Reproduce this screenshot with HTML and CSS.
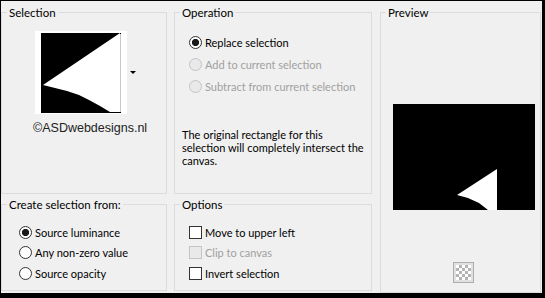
FILE: index.html
```html
<!DOCTYPE html>
<html lang="en">
<head>
    <meta charset="UTF-8">
    <title>Selection from mask</title>
    <link rel="stylesheet" href="styles.css">
</head>
<body>
<div class="dialog">
    <fieldset class="group group-selection">
        <legend>Selection</legend>
        <div class="thumb-row">
            <div class="thumb">
                <svg width="92" height="83" viewBox="0 0 92 83">
                    <rect x="0" y="0" width="92" height="83" fill="#fff"/>
                    <rect x="6" y="2" width="80" height="80" fill="#000"/>
                    <path d="M85 2 L8 54 L20 57 L32 60 L44 64 L54 69 L65 75 L75 81 L85 81 Z" fill="#fff"/>
                    <line x1="85.5" y1="3" x2="85.5" y2="81" stroke="#c8c8c8" stroke-width="1"/>
                </svg>
            </div>
            <span class="drop-arrow"></span>
        </div>
        <p class="credit">&copy;ASDwebdesigns.nl</p>
    </fieldset>

    <fieldset class="group group-operation">
        <legend>Operation</legend>
        <div class="group-body">
            <label class="opt"><input type="radio" name="op" checked><span>Replace selection</span></label>
            <label class="opt disabled"><input type="radio" name="op" disabled><span>Add to current selection</span></label>
            <label class="opt disabled"><input type="radio" name="op" disabled><span>Subtract from current selection</span></label>
        </div>
        <p class="note">The original rectangle for this<br>selection will completely intersect the<br>canvas.</p>
    </fieldset>

    <fieldset class="group group-preview">
        <legend>Preview</legend>
        <div class="preview">
            <svg width="142" height="106" viewBox="0 0 142 106">
                <rect x="0" y="0" width="142" height="106" fill="#000"/>
                <path d="M104 65 L64 91 L75 94 L86 99 L95 106 L104 106 Z" fill="#fff"/>
            </svg>
        </div>
        <button class="checker" type="button" title="Transparency"><span></span></button>
    </fieldset>

    <fieldset class="group group-source">
        <legend>Create selection from:</legend>
        <div class="group-body">
            <label class="opt"><input type="radio" name="src" checked><span>Source luminance</span></label>
            <label class="opt"><input type="radio" name="src"><span>Any non-zero value</span></label>
            <label class="opt"><input type="radio" name="src"><span>Source opacity</span></label>
        </div>
    </fieldset>

    <fieldset class="group group-options">
        <legend>Options</legend>
        <div class="group-body">
            <label class="opt"><input type="checkbox"><span>Move to upper left</span></label>
            <label class="opt disabled"><input type="checkbox" disabled><span>Clip to canvas</span></label>
            <label class="opt"><input type="checkbox"><span>Invert selection</span></label>
        </div>
    </fieldset>
</div>
</body>
</html>
```

FILE: styles.css
```css
* {
    margin: 0;
    padding: 0;
    box-sizing: border-box;
}
body {
    background: #f0f0f0;
    font-family: "Segoe UI", Lato, "Noto Sans", sans-serif;
    font-size: 11px;
    color: #000;
}
.dialog {
    width: 545px;
    height: 298px;
    border-style: solid;
    border-color: #000;
    border-width: 1px 3px 5px 1px;
    padding: 4px 1px 0 0;
    background: #f0f0f0;
    display: grid;
    grid-template-columns: 166px 198px 162px;
    grid-template-rows: 189px 96px;
    column-gap: 7px;
    row-gap: 3px;
}
.group {
    border: 1px solid #dcdcdc;
    min-width: 0;
}
.group legend {
    margin-left: 5px;
    padding: 0 2px;
    font-size: 11.5px;
    line-height: 15px;
}

/* selection */
.group-selection {
    grid-column: 1;
    grid-row: 1;
}
.thumb-row {
    display: flex;
    align-items: center;
    margin: 11px 0 0 33px;
}
.thumb {
    width: 92px;
    height: 83px;
}
.thumb svg {
    display: block;
}
.drop-arrow {
    margin-left: 3px;
    border-left: 3px solid transparent;
    border-right: 3px solid transparent;
    border-top: 3px solid #000;
}
.credit {
    margin: 7px 0 0 31px;
    font-family: "Liberation Sans", Arial, sans-serif;
    font-size: 12.5px;
    line-height: 15px;
    color: #222;
}

/* operation */
.group-operation {
    grid-column: 2;
    grid-row: 1;
}
.group-operation .group-body {
    padding: 11px 0 0 14px;
}
.opt {
    display: flex;
    align-items: center;
    gap: 3px;
    height: 22px;
}
.opt.disabled {
    color: #a0a0a0;
}
.note {
    margin: 31px 0 0 7px;
    line-height: 13px;
}

/* preview */
.group-preview {
    grid-column: 3;
    grid-row: 1 / 3;
    margin-left: 1px;
}
.preview {
    margin: 84px 0 0 12px;
}
.preview svg {
    display: block;
}
.checker {
    display: block;
    width: 21px;
    height: 21px;
    margin: 52px 0 0 72px;
    border: 1px solid #adadad;
    background: #e1e1e1;
    padding: 2px;
}
.checker span {
    display: block;
    width: 15px;
    height: 15px;
    background: repeating-conic-gradient(#b4b4b4 0 25%, #fff 0 50%) 0 0 / 6px 6px;
}

/* bottom row */
.group-source {
    grid-column: 1;
    grid-row: 2;
    margin-bottom: 2px;
}
.group-source .group-body {
    padding: 10px 0 0 17px;
}
.group-options {
    grid-column: 2;
    grid-row: 2;
    margin-bottom: 2px;
}
.group-options .group-body {
    padding: 10px 0 0 14px;
}
.group-source .opt,
.group-options .opt {
    height: 20.5px;
}

/* radios and checkboxes */
input[type="radio"],
input[type="checkbox"] {
    appearance: none;
    -webkit-appearance: none;
    width: 13px;
    height: 13px;
    margin: 0;
    border: 1px solid #333;
    background: #fff;
    flex: none;
}
input[type="radio"] {
    border-radius: 50%;
}
input[type="radio"]:checked {
    background: radial-gradient(circle, #1a1a1a 0 3.3px, #fff 3.9px);
}
input:disabled {
    border-color: #c4c4c4;
    background: #e9e9e9;
}
```
